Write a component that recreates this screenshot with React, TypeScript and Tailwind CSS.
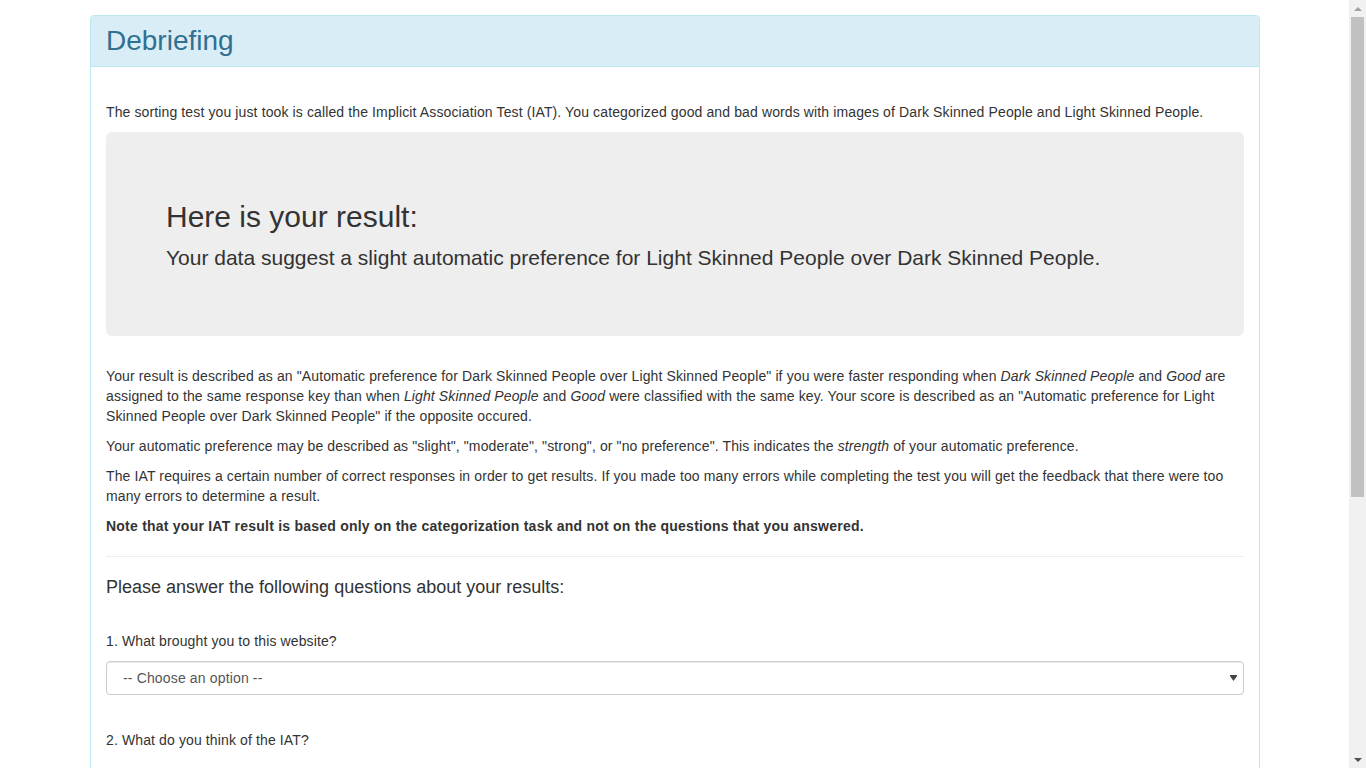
import React from 'react';

const Scrollbar: React.FC = () => (
  <div className="w-[17px] h-full bg-[#f1f1f1] flex flex-col items-center">
    <div className="h-[17px] w-full flex items-center justify-center">
      <svg width="8" height="4" viewBox="0 0 8 4">
        <polygon points="0,4 8,4 4,0" fill="#a3a3a3" />
      </svg>
    </div>
    <div className="w-[13px] h-[480px] bg-[#c1c1c1]" />
    <div className="flex-1" />
    <div className="h-[17px] w-full flex items-center justify-center">
      <svg width="8" height="4" viewBox="0 0 8 4">
        <polygon points="0,0 8,0 4,4" fill="#505050" />
      </svg>
    </div>
  </div>
);

const SelectBox: React.FC = () => (
  <div className="relative mt-[10px]">
    <select className="appearance-none w-full h-[34px] border border-[#cccccc] rounded-[4px] bg-white pl-[16px] pr-[24px] text-[14px] tracking-[0.15px] text-[#555] shadow-[inset_0_1px_1px_rgba(0,0,0,0.075)]">
      <option>-- Choose an option --</option>
    </select>
    <svg
      className="absolute right-[7px] top-[14px] pointer-events-none"
      width="7"
      height="6"
      viewBox="0 0 7 6"
    >
      <rect x="0" y="0" width="7" height="1" fill="#444" />
      <polygon points="0,1 7,1 3.5,6" fill="#444" />
    </svg>
  </div>
);

export default function App() {
  return (
    <div
      className="h-[768px] w-[1366px] overflow-hidden flex bg-white text-[#333] text-[14px] leading-[20px]"
      style={{ fontFamily: '"Liberation Sans", Arial, Helvetica, sans-serif' }}
    >
      <div className="flex-1 min-w-0">
        <div className="ml-[90px] mt-[15px] w-[1170px] border border-[#bce8f1] rounded-[4px] overflow-hidden">
          {/* Heading */}
          <div className="h-[51px] bg-[#d9edf7] border-b border-[#bce8f1] px-[15px] pb-[2px] flex items-center">
            <h2 className="text-[28px] leading-[31px] text-[#31708f] font-normal">Debriefing</h2>
          </div>

          {/* Body */}
          <div className="px-[15px] pt-[35px] pb-[15px] tracking-[0.12px]">
            <p className="mb-[10px]">
              The sorting test you just took is called the Implicit Association Test (IAT). You categorized good and bad words with images of Dark Skinned People and Light Skinned People.
            </p>

            <div className="bg-[#eeeeee] rounded-[6px] px-[60px] pt-[68px] pb-[63px] mb-[30px] tracking-normal">
              <h1 className="text-[30px] leading-[33px] font-normal mb-[10px]">Here is your result:</h1>
              <p className="text-[21px] leading-[30px] font-normal">
                Your data suggest a slight automatic preference for Light Skinned People over Dark Skinned People.
              </p>
            </div>

            <p className="mb-[10px]">
              Your result is described as an "Automatic preference for Dark Skinned People over Light Skinned People" if you were faster responding when <em>Dark Skinned People</em> and <em>Good</em> are assigned to the same response key than when <em>Light Skinned People</em> and <em>Good</em> were classified with the same key. Your score is described as an "Automatic preference for Light Skinned People over Dark Skinned People" if the opposite occured.
            </p>
            <p className="mb-[10px]">
              Your automatic preference may be described as "slight", "moderate", "strong", or "no preference". This indicates the <em>strength</em> of your automatic preference.
            </p>
            <p className="mb-[10px]">
              The IAT requires a certain number of correct responses in order to get results. If you made too many errors while completing the test you will get the feedback that there were too many errors to determine a result.
            </p>
            <p className="font-bold tracking-[0.23px]">
              Note that your IAT result is based only on the categorization task and not on the questions that you answered.
            </p>

            <hr className="mt-[20px] mb-[20px] border-0 border-t border-[#eeeeee]" />

            <h4 className="text-[18px] leading-[20px] font-normal tracking-normal">Please answer the following questions about your results:</h4>

            <div className="mt-[34px]">
              <label className="block">1. What brought you to this website?</label>
              <SelectBox />
            </div>

            <div className="mt-[35px] pb-[60px]">
              <label className="block">2. What do you think of the IAT?</label>
            </div>
          </div>
        </div>
      </div>
      <Scrollbar />
    </div>
  );
}
